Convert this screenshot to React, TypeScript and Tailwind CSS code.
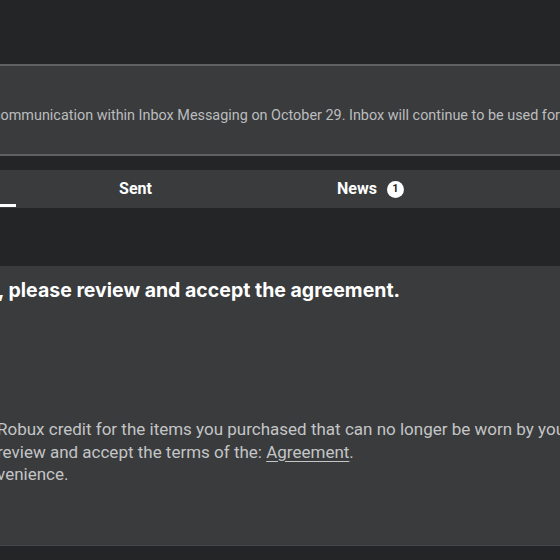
import React from "react";

export default function App() {
  return (
    <div className="w-[560px] h-[560px] overflow-hidden bg-[#232527] flex flex-col" style={{ fontFamily: "Roboto, 'Liberation Sans', sans-serif" }}>
      <div className="h-[64px] shrink-0" />
      <div className="h-[92px] shrink-0 bg-[#393b3d] border-t-2 border-b-2 border-[#5f6163] flex items-center overflow-hidden pt-[12px]">
        <p className="-ml-[7px] whitespace-nowrap text-[14.4px] text-[#bcbdbe]">
          communication within Inbox Messaging on October 29. Inbox will continue to be used for important messages
        </p>
      </div>
      <div className="h-[14px] shrink-0" />
      <div className="h-[38px] shrink-0 bg-[#393b3d] flex overflow-hidden">
        <div className="-ml-[217px] flex">
          <div className="w-[235px] shrink-0 flex items-center justify-center relative">
            <span className="text-white font-bold text-[16px]">Inbox</span>
            <div className="absolute bottom-[1px] left-[6px] right-[2px] h-[3px] bg-white" />
          </div>
          <div className="w-[235px] shrink-0 flex items-center justify-center">
            <span className="text-white font-bold text-[16px]">Sent</span>
          </div>
          <div className="w-[235px] shrink-0 flex items-center justify-center gap-[10px]">
            <span className="text-white font-bold text-[16px]">News</span>
            <span className="w-[17px] h-[17px] rounded-full bg-white text-[#232527] text-[11px] font-bold flex items-center justify-center">1</span>
          </div>
          <div className="w-[235px] shrink-0 flex items-center justify-center">
            <span className="text-white font-bold text-[16px]">Archive</span>
          </div>
        </div>
      </div>
      <div className="h-[58px] shrink-0" />
      <div className="h-[280px] shrink-0 bg-[#393b3d] border-b border-[#444649] overflow-hidden">
        <h2 className="-ml-[2px] mt-[10px] whitespace-nowrap text-white font-bold text-[19.5px]" style={{ fontFamily: "Inter, 'Liberation Sans', sans-serif" }}>
          , please review and accept the agreement.
        </h2>
        <div className="mt-[113px] -ml-[3px] text-[17px] leading-[22.5px] text-[#c4c5c6] whitespace-nowrap">
          <p>Robux credit for the items you purchased that can no longer be worn by your avatar.</p>
          <p>review and accept the terms of the: <span className="underline underline-offset-[3px]">Agreement</span>.</p>
          <p>venience.</p>
        </div>
      </div>
    </div>
  );
}
